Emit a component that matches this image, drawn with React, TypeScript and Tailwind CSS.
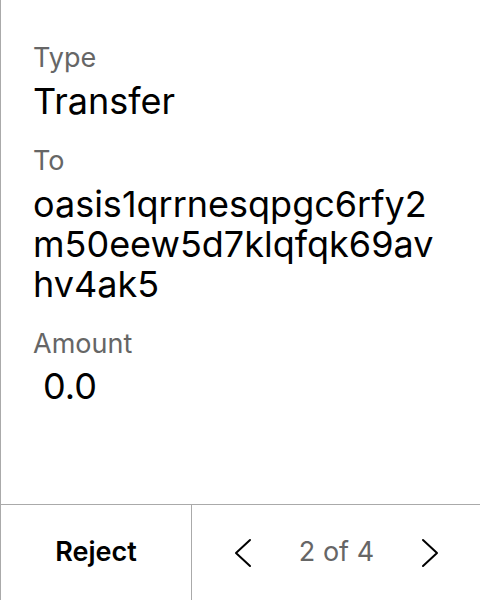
const rows = [
  { label: "Type", value: "Transfer" },
  { label: "To", value: "oasis1qrrnesqpgc6rfy2m50eew5d7klqfqk69avhv4ak5" },
];

function Chevron({ dir }: { dir: "left" | "right" }) {
  return (
    <svg width="20" height="32" viewBox="0 0 20 32" fill="none" stroke="black" strokeWidth={2} strokeLinecap="round" strokeLinejoin="round">
      {dir === "left" ? <path d="M17 3L3 16l14 13" /> : <path d="M3 3l14 13L3 29" />}
    </svg>
  );
}

export default function App() {
  return (
    <div className="w-[480px] h-[600px] bg-white border-l border-[#aaaaaa] flex flex-col text-black" style={{ fontFamily: "Inter, 'Noto Sans', sans-serif" }}>
      {/* Details */}
      <div className="flex-1 px-8 pt-[38px]">
        {rows.map((r) => (
          <div key={r.label} className="mb-[20px]">
            <div className="text-[27px] leading-[40px] text-[#666666]">{r.label}</div>
            <div className="mt-[3px] text-[36px] leading-[40px] break-all">{r.value}</div>
          </div>
        ))}
        <div>
          <div className="text-[27px] leading-[40px] text-[#666666]">Amount</div>
          <div className="mt-[2px] text-[36px] leading-[40px] pl-[10px]">0.0</div>
        </div>
      </div>

      {/* Footer */}
      <div className="h-[96px] border-t border-[#aaaaaa] flex">
        <button className="w-[191px] border-r border-[#aaaaaa] text-[27px] font-semibold flex items-center justify-center">
          Reject
        </button>
        <div className="flex-1 flex items-center justify-between pl-[41px] pr-[40px]">
          <Chevron dir="left" />
          <span className="text-[27px] text-[#666666]">2 of 4</span>
          <Chevron dir="right" />
        </div>
      </div>
    </div>
  );
}
